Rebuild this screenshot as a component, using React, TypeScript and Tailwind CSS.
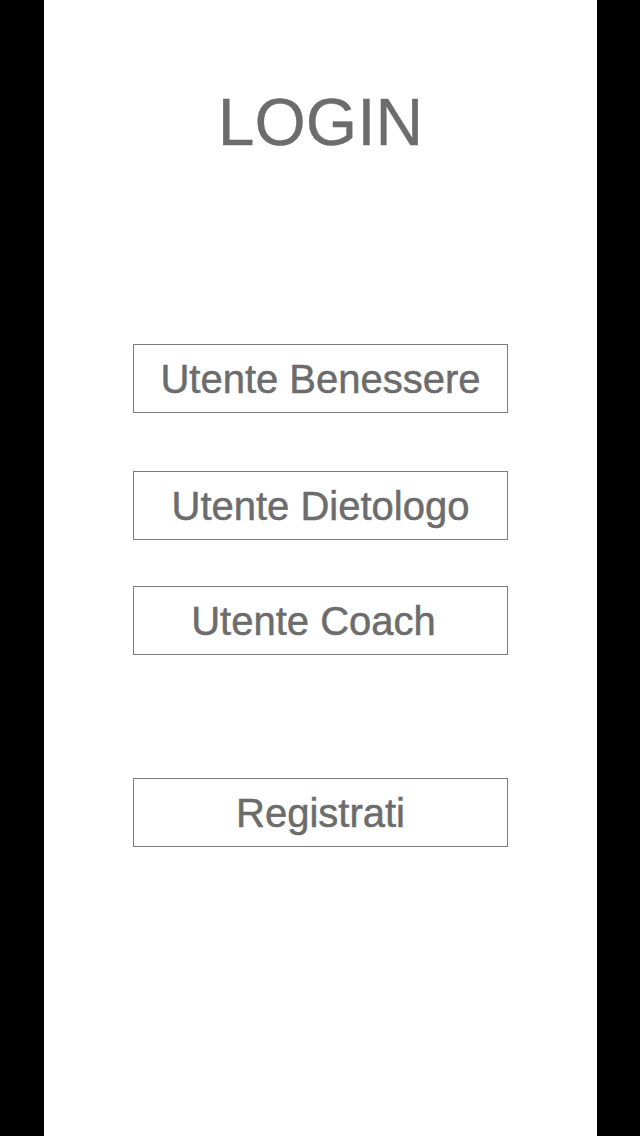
import React from "react";

const btn =
  "w-[375px] h-[69px] mx-auto border border-[#7c7c7c] flex items-center justify-center text-[40px] leading-none text-[#6c6c6c] [-webkit-text-stroke:0.5px_#6c6c6c]";

export default function App() {
  return (
    <div className="w-[640px] h-[1136px] bg-black flex" style={{ fontFamily: '"Liberation Sans", Arial, sans-serif' }}>
      <div className="ml-[44px] w-[553px] h-full bg-white flex flex-col">
        <h1 className="pt-[89px] text-center text-[66px] leading-none text-[#6c6c6c] [-webkit-text-stroke:0.3px_#6c6c6c]">LOGIN</h1>
        <div className={`${btn} mt-[189px]`}>Utente Benessere</div>
        <div className={`${btn} mt-[58px]`}>Utente Dietologo</div>
        <div className={`${btn} mt-[46px]`}>
          <span className="pr-[14px]">Utente Coach</span>
        </div>
        <div className={`${btn} mt-[123px]`}>Registrati</div>
      </div>
    </div>
  );
}
